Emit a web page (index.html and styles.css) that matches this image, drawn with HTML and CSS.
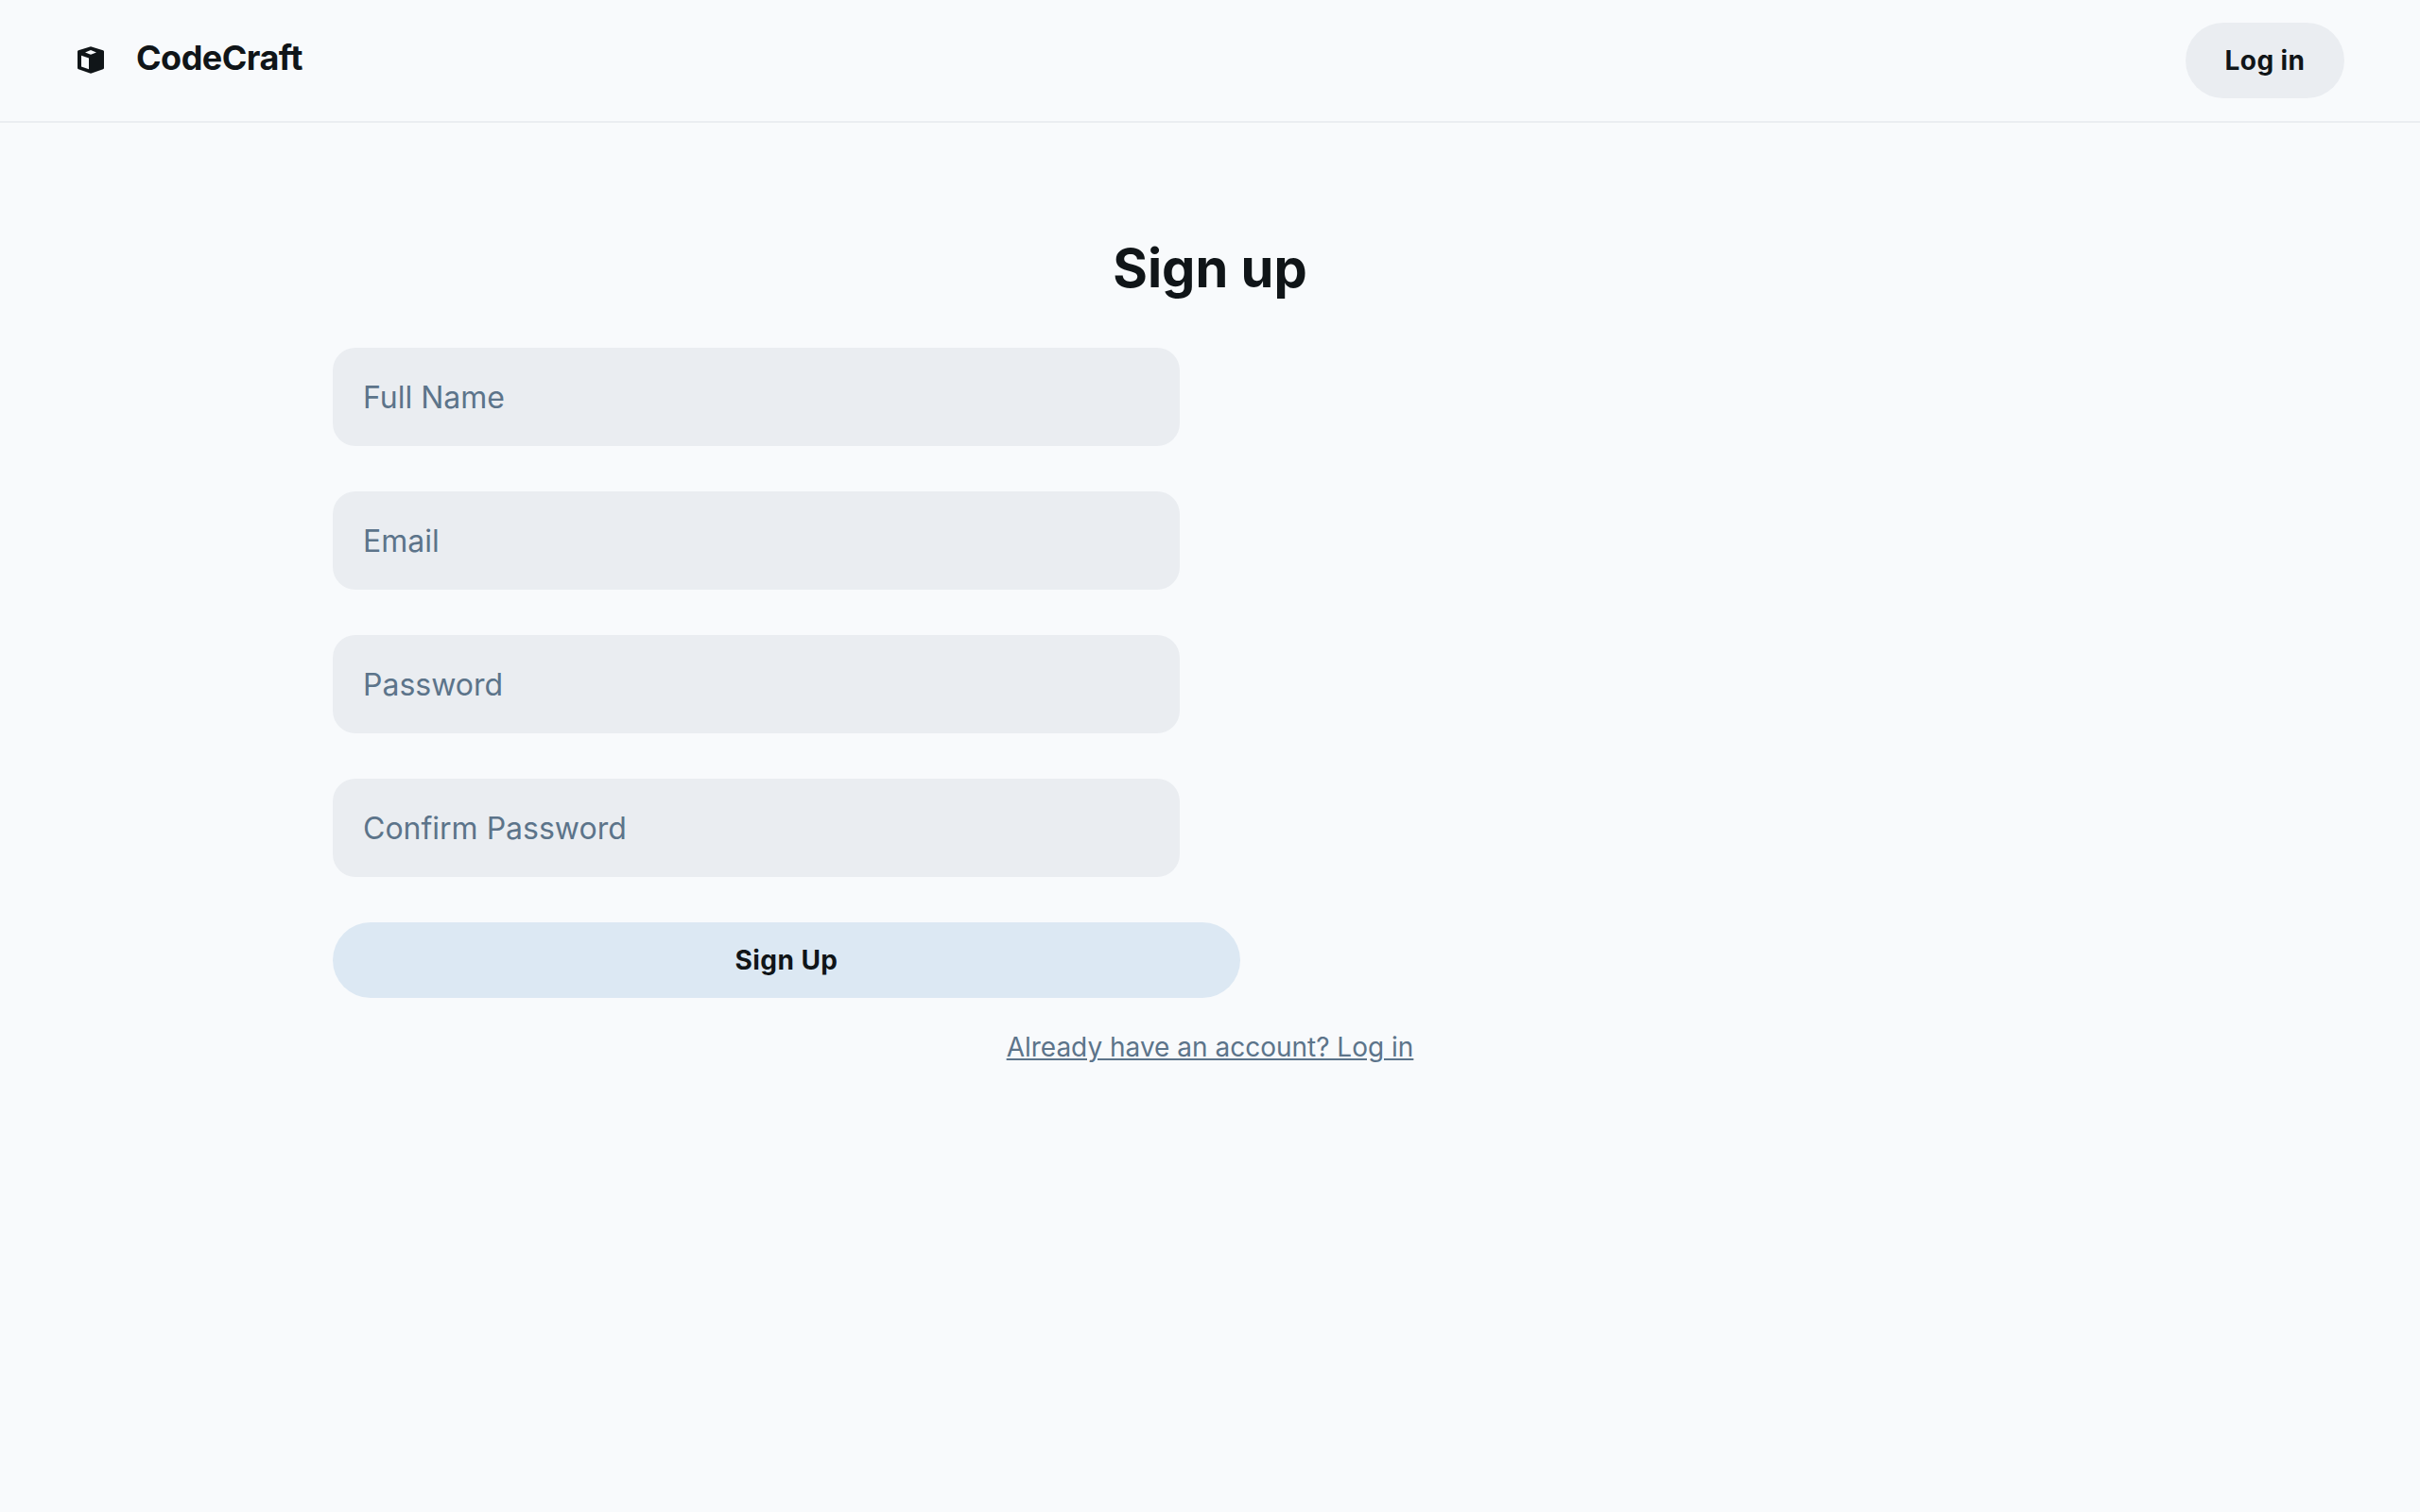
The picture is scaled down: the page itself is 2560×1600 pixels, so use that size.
FILE: index.html
```html
<!DOCTYPE html>
<html lang="en">
<head>
  <meta charset="utf-8">
  <meta name="viewport" content="width=device-width, initial-scale=1">
  <title>CodeCraft - Sign up</title>
  <link rel="stylesheet" href="styles.css">
</head>
<body>
  <header class="site-header">
    <div class="brand">
      <svg class="brand-icon" viewBox="0 0 32 32" fill="currentColor" aria-hidden="true">
        <path fill-rule="evenodd" d="M15.2 1.5Q16 1.2 16.8 1.5L29 5.2Q30 5.6 30 6.6V24Q30 24.9 29 25.3L16.8 29.5Q16 29.8 15.2 29.5L3 25.3Q2 24.9 2 24V6.6Q2 5.6 3 5.2ZM16 5L10 7.4L16 9.8L22 7.4ZM6 10.8V22.4L14 25.2V13.6Z"/>
      </svg>
      <span class="brand-name">CodeCraft</span>
    </div>
    <button class="button button-muted" type="button">Log in</button>
  </header>
  <main class="page">
    <h1 class="title">Sign up</h1>
    <form class="form">
      <input class="field" type="text" placeholder="Full Name" aria-label="Full Name">
      <input class="field" type="email" placeholder="Email" aria-label="Email">
      <input class="field" type="password" placeholder="Password" aria-label="Password">
      <input class="field" type="password" placeholder="Confirm Password" aria-label="Confirm Password">
      <button class="button button-primary" type="submit">Sign Up</button>
    </form>
    <a class="login-link" href="#">Already have an account? Log in</a>
  </main>
</body>
</html>
```
FILE: styles.css
```css
* {
  box-sizing: border-box;
}

body {
  margin: 0;
  min-height: 100vh;
  background: #f8fafc;
  color: #101518;
  font-family: Inter, "Noto Sans", sans-serif;
  font-size: 28px;
  line-height: 40px;
}

.site-header {
  display: flex;
  align-items: center;
  justify-content: space-between;
  padding: 24px 80px;
  border-bottom: 2px solid #eaedf1;
}

.brand {
  display: flex;
  align-items: center;
  gap: 32px;
}

.brand-icon {
  width: 32px;
  height: 32px;
}

.brand-name {
  padding-bottom: 6px;
  font-size: 36px;
  font-weight: 700;
  line-height: 44px;
  letter-spacing: -0.015em;
}

.button {
  height: 80px;
  padding: 0 32px;
  border: 0;
  border-radius: 40px;
  color: inherit;
  font: inherit;
  font-weight: 700;
  letter-spacing: 0.015em;
  cursor: pointer;
}

.button-muted {
  min-width: 168px;
  background: #eaedf1;
}

.button-primary {
  width: 100%;
  background: #dce8f3;
}

.page {
  display: flex;
  flex-direction: column;
  align-items: center;
  max-width: 1920px;
  margin: 0 auto;
  padding: 120px 32px 80px;
}

.title {
  margin: 0 0 50px;
  font-size: 56px;
  font-weight: 700;
  line-height: 68px;
}

.form {
  display: flex;
  flex-direction: column;
  align-items: flex-start;
  gap: 48px;
  align-self: flex-start;
  width: 100%;
  max-width: 960px;
}

.field {
  width: calc(100% - 64px);
  height: 104px;
  padding: 0 32px;
  border: 0;
  border-radius: 24px;
  background: #eaedf1;
  color: inherit;
  font: inherit;
  font-size: 32px;
}

.field::placeholder {
  color: #5c748a;
  opacity: 1;
}

.login-link {
  margin-top: 32px;
  color: #5c748a;
}
```
